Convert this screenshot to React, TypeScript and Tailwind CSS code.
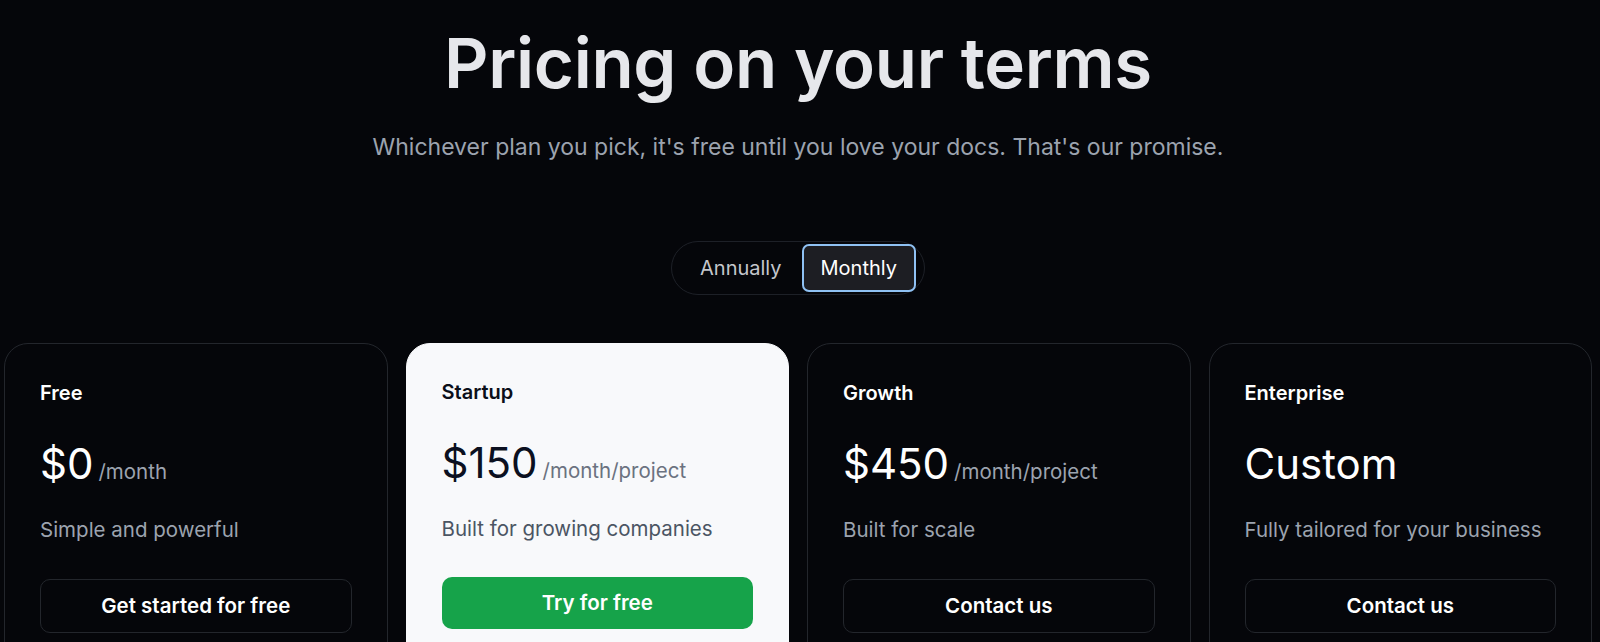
import React from "react";

type Plan = {
  name: string;
  price: string;
  unit?: string;
  desc: string;
  cta: string;
  featured?: boolean;
};

const plans: Plan[] = [
  { name: "Free", price: "$0", unit: "/month", desc: "Simple and powerful", cta: "Get started for free" },
  { name: "Startup", price: "$150", unit: "/month/project", desc: "Built for growing companies", cta: "Try for free", featured: true },
  { name: "Growth", price: "$450", unit: "/month/project", desc: "Built for scale", cta: "Contact us" },
  { name: "Enterprise", price: "Custom", desc: "Fully tailored for your business", cta: "Contact us" },
];

function PlanCard({ plan }: { plan: Plan }) {
  const f = plan.featured;
  return (
    <div
      className={
        f
          ? "rounded-[24px] bg-[#f8f9fb] border border-[#f8f9fb] px-[35px] pt-[34px] pb-10 min-h-[340px]"
          : "rounded-[24px] border border-[#23262c] px-[35px] pt-[35px] pb-10 min-h-[340px]"
      }
    >
      <div className={f ? "text-[20px] leading-[28px] font-semibold text-[#0b0f19]" : "text-[20px] leading-[28px] font-semibold text-white"}>
        {plan.name}
      </div>
      <div className="mt-[36px] h-[42px] flex items-baseline gap-[5px]">
        <span className={f ? "text-[42px] leading-none text-[#0b1020]" : "text-[42px] leading-none text-white"}>{plan.price}</span>
        {plan.unit && (
          <span className={f ? "text-[20.5px] leading-none text-[#6b7280]" : "text-[20.5px] leading-none text-[#9ca3af]"}>{plan.unit}</span>
        )}
      </div>
      <div className={f ? "mt-[31px] text-[20.5px] leading-[28px] text-[#4b5563]" : "mt-[31px] text-[20.5px] leading-[28px] text-[#9ca3af]"}>
        {plan.desc}
      </div>
      {f ? (
        <button className="mt-[34px] w-full h-[52px] rounded-[10px] bg-[#16a34a] text-white text-[20.5px] font-semibold">
          {plan.cta}
        </button>
      ) : (
        <button className="mt-[35px] w-full h-[54px] rounded-[10px] border border-[#23262c] text-white text-[20.5px] font-semibold">
          {plan.cta}
        </button>
      )}
    </div>
  );
}

export default function App() {
  return (
    <div className="min-h-screen bg-[#05060a] overflow-hidden font-['Inter',sans-serif]">
      <div className="pl-[4px] pr-[8px] flex flex-col items-center">
        <h1 className="pt-[29px] text-[69px] leading-none font-semibold tracking-[-0.3px] text-[#e6e7eb]">
          Pricing on your terms
        </h1>
        <p className="mt-[33px] text-[23px] leading-[32px] text-[#9ca3af]">
          Whichever plan you pick, it's free until you love your docs. That's our promise.
        </p>

        <div className="mt-[78px] flex items-center h-[54px] rounded-full border border-[#1d2027] pl-[28px] pr-[8px]">
          <span className="mr-[20px] text-[20px] text-[#c4c6cc]">Annually</span>
          <button className="h-[48px] px-[17px] rounded-[7px] border-2 border-[#8fc1f3] bg-[#1d1e23] text-[20px] text-white">
            Monthly
          </button>
        </div>

        <div className="mt-[48px] w-full grid grid-cols-4 gap-[18px]">
          {plans.map((p) => (
            <PlanCard key={p.name} plan={p} />
          ))}
        </div>
      </div>
    </div>
  );
}
